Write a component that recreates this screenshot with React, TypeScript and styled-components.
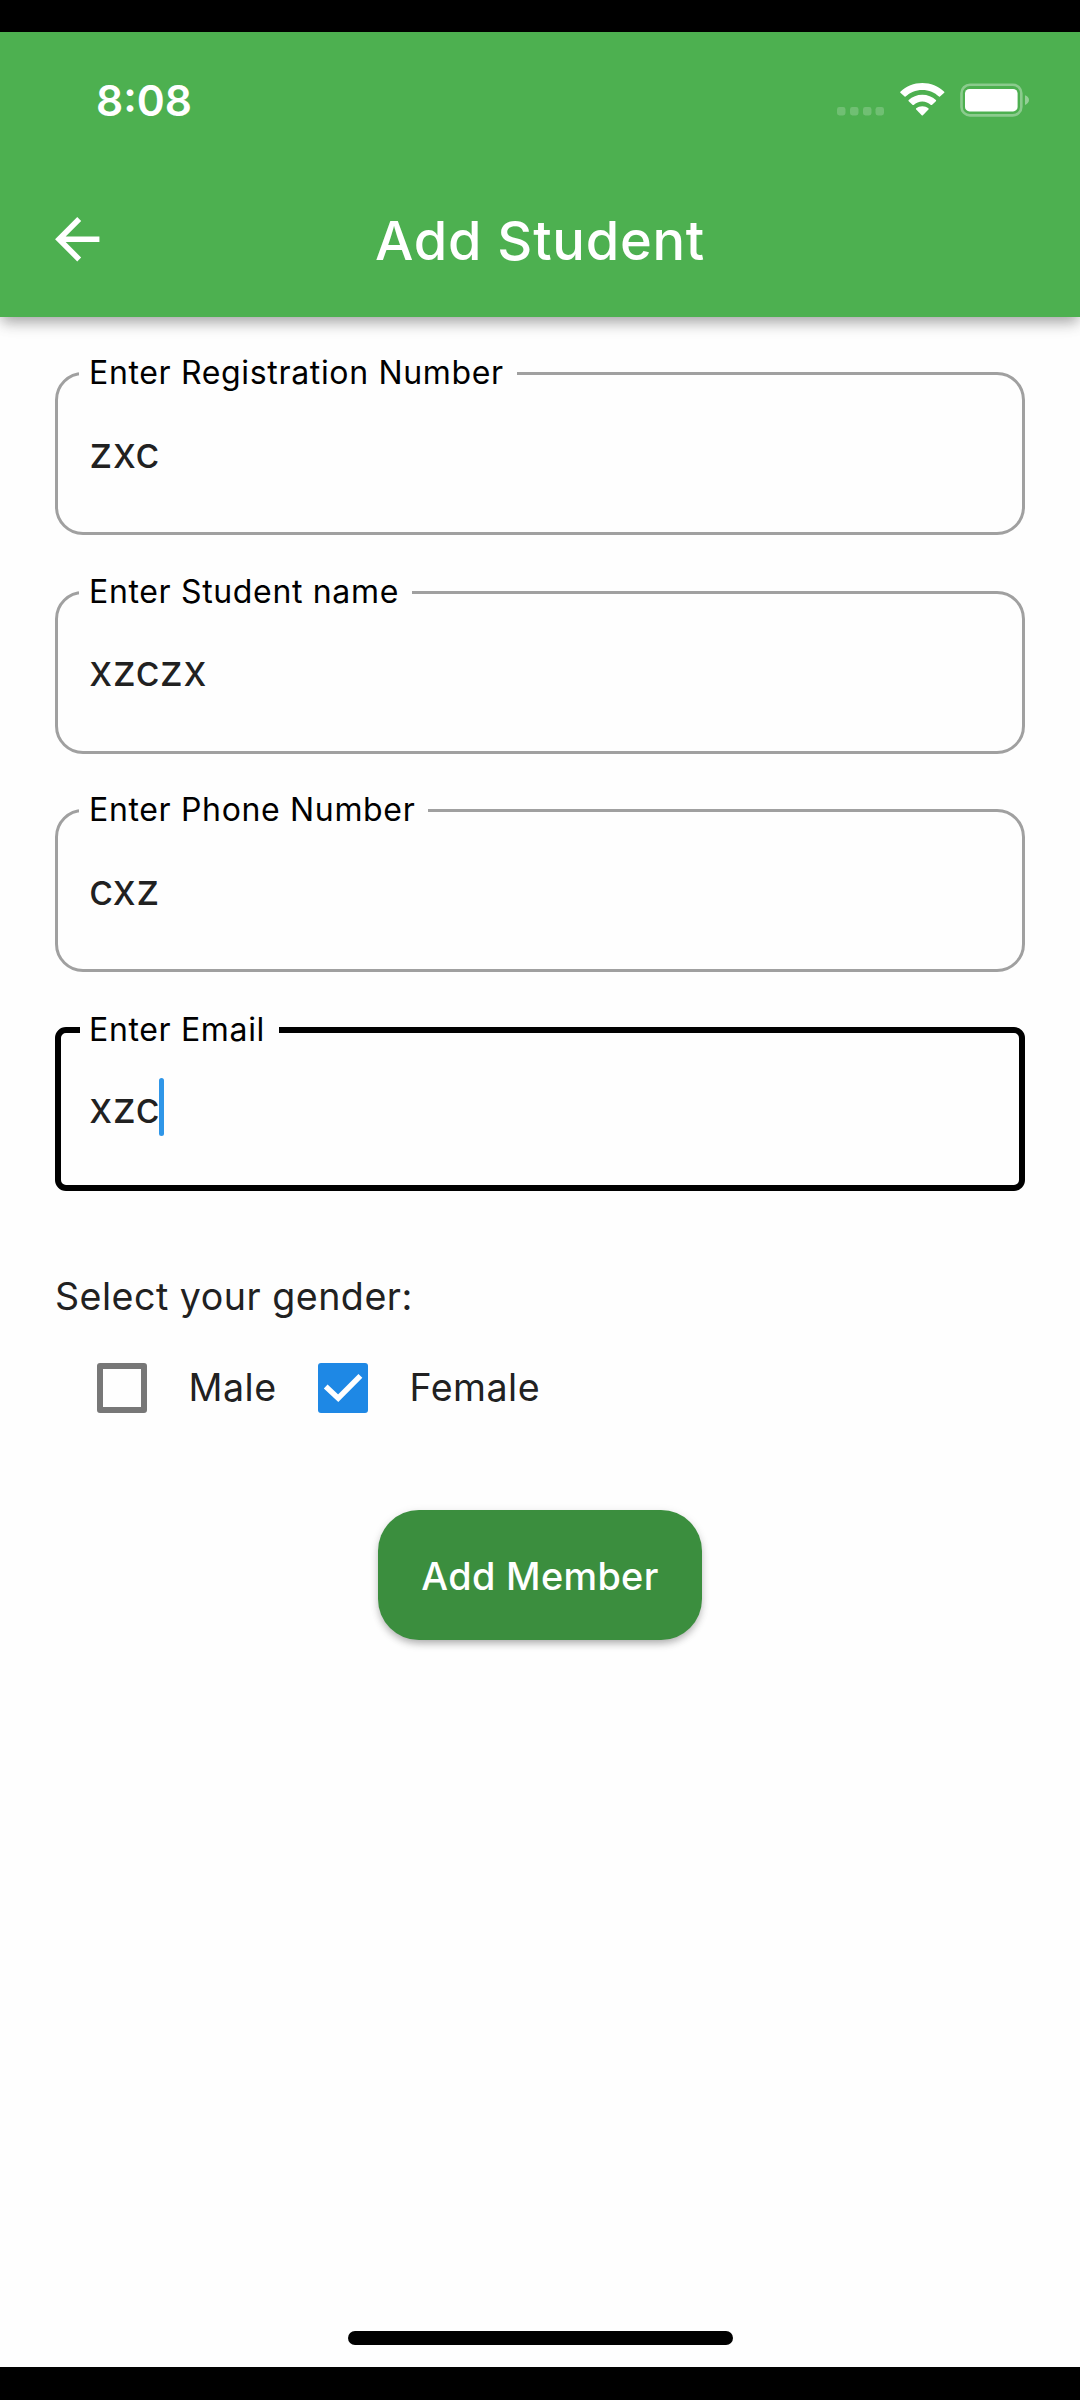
import React, { useState } from "react";
import styled, { createGlobalStyle, css } from "styled-components";

const GlobalStyle = createGlobalStyle`
  *, *::before, *::after { box-sizing: border-box; }
  body {
    margin: 0;
    background: #000;
    font-family: Inter, "Liberation Sans", sans-serif;
    color: #212121;
  }
`;

const Device = styled.div`
  display: flex;
  flex-direction: column;
  width: 1080px;
  height: 2400px;
  padding: 32px 0 33px;
  background: #000;
`;

const Screen = styled.main`
  display: flex;
  flex: 1;
  flex-direction: column;
  background: #fefefe;
`;

const AppBar = styled.header`
  height: 285px;
  background: #4db050;
  color: #fff;
  box-shadow: 0 7px 13px -2px rgba(0, 0, 0, 0.3), 0 3px 20px rgba(0, 0, 0, 0.1);
`;

const StatusBar = styled.div`
  display: flex;
  align-items: flex-start;
  justify-content: space-between;
  height: 130px;
  padding: 51px 50px 0 96px;
`;

const Clock = styled.span`
  font-size: 42.5px;
  font-weight: 600;
  line-height: 36px;
`;

const StatusIcons = styled.div`
  display: flex;
  align-items: flex-end;
  gap: 15.5px;
  height: 34px;
  svg { display: block; }
`;

const Toolbar = styled.div`
  display: grid;
  grid-template-columns: 1fr auto 1fr;
  align-items: center;
  height: 155px;
  padding: 0 44px;
`;

const BackButton = styled.button`
  display: flex;
  width: 67px;
  height: 67px;
  padding: 0;
  border: 0;
  background: none;
  color: inherit;
`;

const Title = styled.h1`
  margin: 0;
  font-size: 54.2px;
  font-weight: 550;
  letter-spacing: 0.75px;
  line-height: 66px;
`;

const Form = styled.form`
  display: flex;
  flex-direction: column;
  padding: 37px 55px 0;
`;

const Fields = styled.div`
  display: flex;
  flex-direction: column;
  gap: 37.67px;
`;

const FieldBox = styled.fieldset<{ $focused: boolean }>`
  height: 181px;
  min-width: 0;
  margin: 0;
  ${({ $focused }) =>
    $focused
      ? css`
          padding: 27.5px 19px 0;
          border: 6px solid #000;
          border-radius: 11px;
        `
      : css`
          padding: 30px 21px 0;
          border: 3px solid #a0a0a0;
          border-radius: 28px;
        `}
`;

const FieldLabel = styled.legend<{ $focused: boolean }>`
  padding: ${({ $focused }) => ($focused ? "1px 14px 3px 9px" : "0 13px 2px 10px")};
  color: #000;
  font-size: 32px;
  letter-spacing: 0.66px;
  line-height: 37px;
`;

const FieldValue = styled.div<{ $focused: boolean }>`
  display: flex;
  align-items: center;
  height: 58px;
  padding-left: ${({ $focused }) => ($focused ? 9 : 10)}px;
  font-size: 42.8px;
  letter-spacing: 0.1px;
  line-height: 59px;
`;

const Caret = styled.span`
  width: 5.5px;
  height: 58px;
  margin-left: -1.5px;
  border-radius: 3px;
  background: #2f96e8;
`;

const GroupLabel = styled.p`
  margin: 83px 0 0;
  font-size: 37.6px;
  letter-spacing: 0.5px;
  line-height: 46px;
`;

const Choices = styled.div`
  display: flex;
  align-items: center;
  height: 50px;
  margin-top: 43px;
  padding-left: 42px;
`;

const Choice = styled.button<{ $width: number }>`
  display: flex;
  align-items: center;
  gap: 41.5px;
  width: ${({ $width }) => $width}px;
  padding: 0;
  border: 0;
  background: none;
  color: inherit;
  font: inherit;
  font-size: 37.6px;
  letter-spacing: 0.5px;
  line-height: 50px;
`;

const CheckSquare = styled.span<{ $checked: boolean }>`
  flex: none;
  width: 50px;
  height: 50px;
  border: ${({ $checked }) => ($checked ? "0" : "6px solid #777")};
  border-radius: 3px;
  background: ${({ $checked }) => ($checked ? "#1e88e5" : "transparent")};
  svg { display: block; }
`;

const SubmitButton = styled.button`
  align-self: center;
  width: 324px;
  height: 130px;
  margin-top: 97.500px;
  padding: 1px 0 0;
  border: 0;
  border-radius: 41px;
  background: #3b8e3e;
  box-shadow: 0 5px 8px -2px rgba(0, 0, 0, 0.28), 0 2px 10px rgba(0, 0, 0, 0.1);
  color: #fff;
  font: inherit;
  font-size: 37.8px;
  font-weight: 550;
  letter-spacing: 0.35px;
`;

const HomeIndicator = styled.div`
  width: 385px;
  height: 14px;
  margin: auto auto 22px 348px;
  border-radius: 7px;
  background: #000;
`;

const CellularIcon = () => (
  <svg width="47" height="9" viewBox="0 0 47 9" fill="#fff" fillOpacity="0.2" transform="translate(0 -1)">
    {[0, 13, 26, 38.5].map((x) => (
      <rect key={x} x={x} y="0" width="8.5" height="8.5" rx="2.4" />
    ))}
  </svg>
);

const WifiIcon = () => (
  <svg width="45" height="33" viewBox="0 0 45 33" fill="#fff" transform="translate(0 -1)">
    <path d="M22.3 7C29 7 34.700 9.500 39 13.600Q39.500 14.100 40 13.600L44.200 9.800Q44.700 9.200 44.200 8.700C38.300 3.200 30.800 0 22.300 0S6.300 3.200.400 8.700Q-.1 9.200.400 9.800L4.600 13.600Q5.100 14.100 5.600 13.600C9.900 9.500 15.600 7 22.300 7Z" />
    <path d="M22.300 18.600C25.600 18.600 28.500 19.900 30.900 21.900Q31.400 22.300 31.900 21.900L35.900 18.200Q36.500 17.600 35.900 17C32.300 13.700 27.600 11.700 22.300 11.700S12.300 13.700 8.700 17Q8.100 17.600 8.700 18.200L12.700 21.900Q13.200 22.300 13.700 21.900C16.100 19.900 19 18.600 22.300 18.600Z" />
    <path d="M22.300 23.200C19.900 23.200 17.800 24 16.200 25.300Q15.700 25.800 16.200 26.400L21.700 32.200Q22.300 32.800 22.900 32.200L28.400 26.400Q28.900 25.800 28.400 25.300C26.800 24 24.700 23.200 22.300 23.200Z" />
  </svg>
);

const BatteryIcon = () => (
  <svg width="70" height="34" viewBox="0 0 70 34" fill="none">
    <rect x="1.500" y="1.800" width="59.800" height="30.600" rx="8.500" stroke="#fff" strokeOpacity="0.35" strokeWidth="2.600" />
    <rect x="5" y="5.900" width="52.600" height="22.500" rx="4.500" fill="#fff" />
    <path d="M65 12.300C67.600 13.200 69 15 69 17.100S67.600 21 65 21.900Z" fill="#fff" fillOpacity="0.4" />
  </svg>
);

const BackIcon = () => (
  <svg width="66.500" height="66.500" viewBox="0 0 24 24" fill="currentColor">
    <path d="M20 11H7.830l5.590-5.590L12 4l-8 8 8 8 1.410-1.410L7.830 13H20v-2z" />
  </svg>
);

const CheckIcon = () => (
  <svg width="50" height="50" viewBox="0 0 50 50" fill="none" stroke="#fff" strokeWidth="5.500">
    <path d="M7.700 23.600L20.200 35.200L42.400 12.900" />
  </svg>
);

const fields = [
  { label: "Enter Registration Number", value: "zxc" },
  { label: "Enter Student name", value: "xzczx" },
  { label: "Enter Phone Number", value: "cxz" },
  { label: "Enter Email", value: "xzc", focused: true },
];

const genders = [
  { name: "Male", width: 221 },
  { name: "Female", width: 230 },
];

function Field({ label, value, focused = false }: { label: string; value: string; focused?: boolean }) {
  return (
    <FieldBox $focused={focused}>
      <FieldLabel $focused={focused}>{label}</FieldLabel>
      <FieldValue $focused={focused}>
        {value}
        {focused && <Caret />}
      </FieldValue>
    </FieldBox>
  );
}

export default function App() {
  const [gender, setGender] = useState("Female");
  return (
    <Device>
      <GlobalStyle />
      <Screen>
        <AppBar>
          <StatusBar>
            <Clock>8:08</Clock>
            <StatusIcons>
              <CellularIcon />
              <WifiIcon />
              <BatteryIcon />
            </StatusIcons>
          </StatusBar>
          <Toolbar>
            <BackButton type="button" aria-label="Back">
              <BackIcon />
            </BackButton>
            <Title>Add Student</Title>
          </Toolbar>
        </AppBar>
        <Form>
          <Fields>
            {fields.map((field) => (
              <Field key={field.label} {...field} />
            ))}
          </Fields>
          <GroupLabel>Select your gender:</GroupLabel>
          <Choices>
            {genders.map(({ name, width }) => (
              <Choice
                key={name}
                type="button"
                role="checkbox"
                aria-checked={gender === name}
                $width={width}
                onClick={() => setGender(name)}
              >
                <CheckSquare $checked={gender === name}>{gender === name && <CheckIcon />}</CheckSquare>
                {name}
              </Choice>
            ))}
          </Choices>
          <SubmitButton type="button">Add Member</SubmitButton>
        </Form>
        <HomeIndicator />
      </Screen>
    </Device>
  );
}
